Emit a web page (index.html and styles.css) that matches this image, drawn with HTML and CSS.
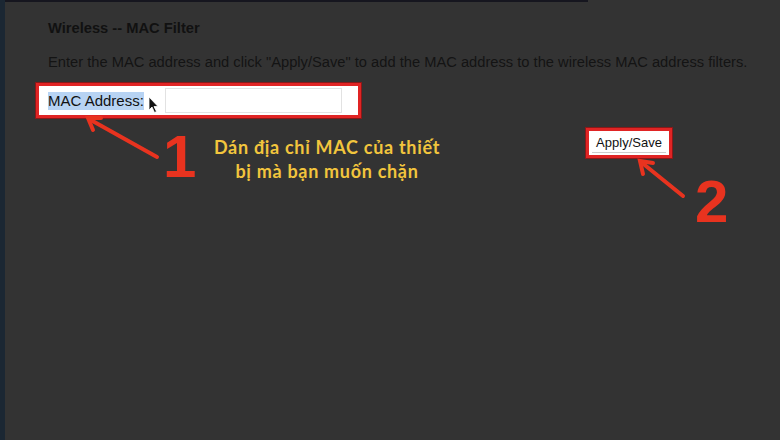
FILE: index.html
```html
<!DOCTYPE html>
<html lang="vi">
<head>
<meta charset="utf-8">
<title>Wireless -- MAC Filter</title>
<link rel="stylesheet" href="styles.css">
</head>
<body>
<div class="frame">
  <div class="topline"></div>
  <div class="content">
    <h1 class="title">Wireless -- MAC Filter</h1>
    <p class="desc">Enter the MAC address and click "Apply/Save" to add the MAC address to the wireless MAC address filters.</p>
    <div class="mac-box">
      <span class="label">MAC Address:</span>
      <svg class="cursor" width="12" height="18" viewBox="0 0 12 18"><path d="M1 1 L1 14 L4 11 L6.5 16.5 L8.5 15.5 L6 10.5 L10 10.5 Z" fill="#111" stroke="#fff" stroke-width="0.8"/></svg>
      <span class="input"></span>
    </div>
    <div class="apply-row">
      <div class="apply-box"><span class="apply-btn">Apply/Save</span></div>
    </div>
  </div>

  <svg class="arrows" width="780" height="440" viewBox="0 0 780 440">
    <g stroke="#e8331f" stroke-width="4" stroke-linecap="round" fill="none">
      <line x1="157" y1="157" x2="89" y2="119"/>
      <polyline points="101,118 88,118 93,130"/>
      <line x1="683" y1="196" x2="641" y2="162"/>
      <polyline points="653,163 640,161 643,174"/>
    </g>
  </svg>
  <span class="num num1">1</span>
  <span class="num num2">2</span>
  <p class="caption">Dán địa chỉ MAC của thiết<br>bị mà bạn muốn chặn</p>
</div>
</body>
</html>
```
FILE: styles.css
```css
html, body {
  margin: 0;
  padding: 0;
}
body {
  width: 780px;
  height: 440px;
  overflow: hidden;
  background: #333333;
  font-family: "Liberation Sans", Arial, sans-serif;
}
.frame {
  position: relative;
  width: 780px;
  height: 440px;
  box-sizing: border-box;
  border-left: 5px solid #1b2733;
  background: #333333;
}
.topline {
  width: 583px;
  height: 2px;
  background: #16161f;
}
.content {
  padding-left: 43px;
  padding-top: 18px;
}
.title {
  margin: 0;
  font-size: 14.7px;
  font-weight: bold;
  color: #111111;
  line-height: 16px;
}
.desc {
  margin: 18px 0 0;
  font-size: 14.7px;
  line-height: 16px;
  color: #141414;
  white-space: nowrap;
}
.mac-box {
  margin: 13px 0 0 -12px;
  width: 310px;
  height: 29px;
  border: 3px solid #e02424;
  box-shadow: 0 0 0 1px #8a1818;
  background: #ffffff;
  display: flex;
  align-items: center;
  padding-left: 9px;
  box-sizing: content-box;
}
.label {
  font-size: 15px;
  line-height: 18px;
  color: #111;
  background: #b7d3f3;
}
.cursor {
  margin: 8px 0 0 4px;
}
.input {
  width: 175px;
  height: 23px;
  margin-left: 5px;
  border: 1px solid #e2e2e2;
  background: #fff;
}
.apply-row {
  display: flex;
  margin-top: 10px;
  padding-left: 538px;
}
.apply-box {
  width: 80px;
  height: 24px;
  border: 3px solid #e02424;
  box-shadow: 0 0 0 1px #8a1818;
  background: #ffffff;
  display: flex;
  align-items: center;
  justify-content: center;
}
.apply-btn {
  font-size: 13px;
  color: #111;
  padding: 2px 4px;
  border-bottom: 1px solid #cccccc;
}
.arrows {
  position: absolute;
  left: -5px;
  top: 0;
}
.num {
  position: absolute;
  font-family: "Liberation Sans", Arial, sans-serif;
  font-weight: bold;
  color: #e8331f;
  font-size: 60px;
  line-height: 60px;
}
.num1 {
  left: 158px;
  top: 127px;
}
.num2 {
  left: 690px;
  top: 172px;
}
.caption {
  position: absolute;
  left: 190px;
  top: 135px;
  width: 264px;
  margin: 0;
  text-align: center;
  font-family: Lato, "Open Sans", sans-serif;
  font-weight: bold;
  font-size: 18px;
  letter-spacing: 0.7px;
  line-height: 24px;
  color: #f2c53d;
}
```
